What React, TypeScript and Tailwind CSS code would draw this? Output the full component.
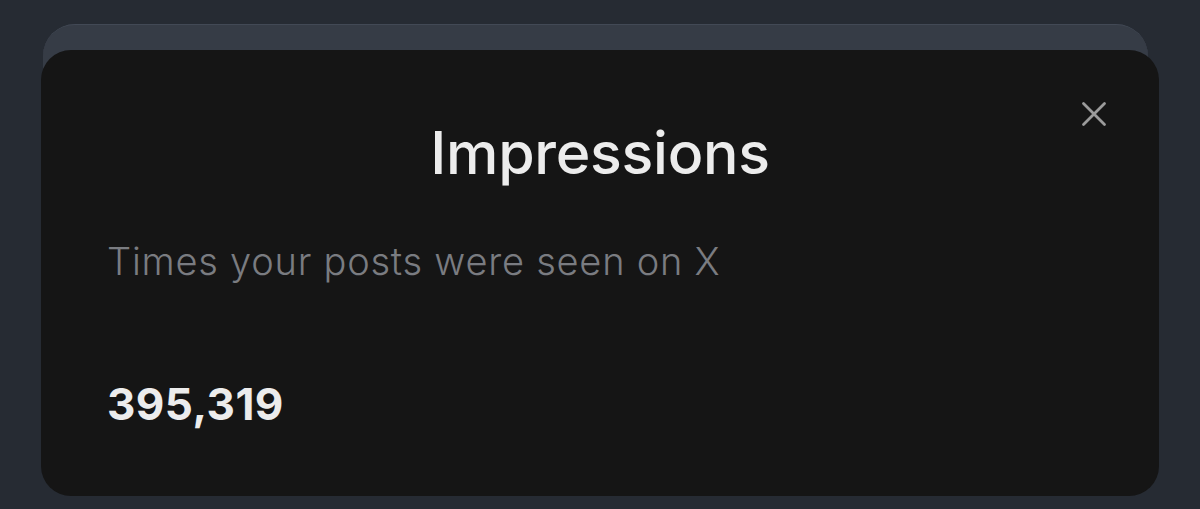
import React from "react"

export default function App() {
    return (
        <div className="w-[1200px] h-[509px] bg-[#262b33] overflow-hidden" style={{ fontFamily: "Inter, 'Noto Sans', sans-serif" }}>
            <div className="pt-[24px] pl-[41px] pr-[41px]">
                {/* stacked card behind */}
                <div className="ml-[2px] mr-[11px] h-[60px] rounded-t-[32px] bg-[#363c46] border-t border-[#424955]" />

                {/* front sheet */}
                <div className="-mt-[34px] relative h-[446px] rounded-[30px] bg-[#151515] px-[66px] pt-[73px]">
                    <button className="absolute right-[50px] top-[49px] w-[30px] h-[30px] flex items-center justify-center text-[#9b9b9b]">
                        <svg width="28" height="28" viewBox="0 0 24 24" fill="none" stroke="currentColor" strokeWidth="2.4" strokeLinecap="round">
                            <path d="M3 3l18 18M21 3L3 21" />
                        </svg>
                    </button>

                    <h2 className="text-center text-[59px] leading-none font-medium text-[#ececec] tracking-[-0.005em]">
                        Impressions
                    </h2>
                    <p className="mt-[60px] text-[38px] leading-none font-light text-[#7a7c81] tracking-[0.02em]">
                        Times your posts were seen on X
                    </p>
                    <p className="mt-[102px] text-[44px] leading-none font-bold text-[#ececec] tracking-[0.01em]">
                        395,319
                    </p>
                </div>
            </div>
        </div>
    )
}
